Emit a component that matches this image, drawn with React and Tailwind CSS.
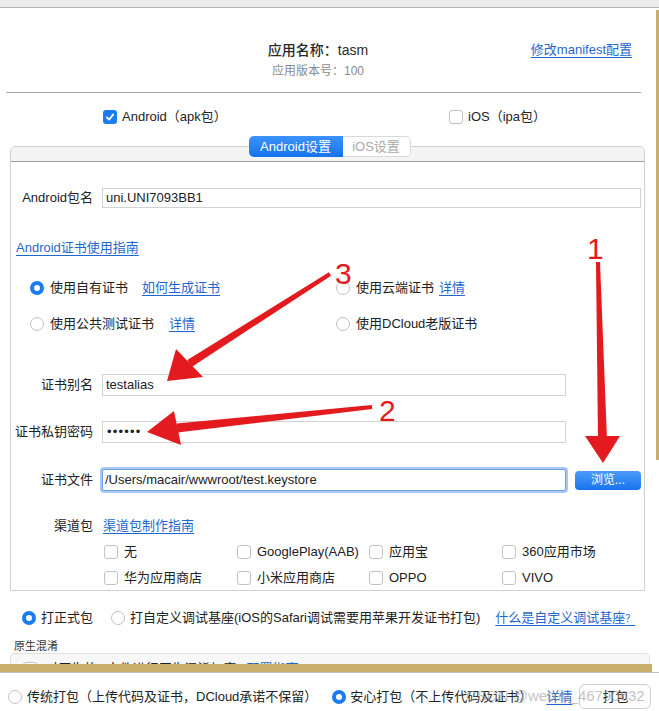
import React from 'react';

const Check = ({ checked }) =>
  checked ? (
    <span className="flex h-[14px] w-[14px] shrink-0 items-center justify-center rounded-[3px] bg-[#1a7cf2]">
      <svg width="10" height="10" viewBox="0 0 10 10">
        <path d="M1.8 5.3 L4.1 7.6 L8.3 2.4" fill="none" stroke="white" strokeWidth="1.8" strokeLinecap="round" strokeLinejoin="round" />
      </svg>
    </span>
  ) : (
    <span className="block h-[14px] w-[14px] shrink-0 rounded-[3px] border border-[#c2c2c2] bg-white" />
  );

const Radio = ({ checked }) =>
  checked ? (
    <span className="flex h-[14px] w-[14px] shrink-0 items-center justify-center rounded-full bg-[#1a7cf2]">
      <span className="block h-[6px] w-[6px] rounded-full bg-white" />
    </span>
  ) : (
    <span className="block h-[14px] w-[14px] shrink-0 rounded-full border border-[#c2c2c2] bg-white" />
  );

const Link = ({ children, className = '' }) => (
  <span className={'text-[#1f67cf] underline decoration-[#1f67cf] underline-offset-[3px] ' + className}>{children}</span>
);

const CheckItem = ({ label, className = '' }) => (
  <div className={'flex items-center ' + className}>
    <Check />
    <span className="ml-[6px]">{label}</span>
  </div>
);

const Arrows = () => (
  <svg className="pointer-events-none absolute left-0 top-0" width="659" height="711" viewBox="0 0 659 711">
    <g fill="#e41b1e">
      {/* 1 */}
      <polygon points="596,262 600,262 607,440 598,440" />
      <polygon points="585,436 620,436 603,463" />
      {/* 3 */}
      <polygon points="328.9,272.3 331.1,275.7 191.7,366.9 187.3,360.1" />
      <polygon points="176,349 203,377 167,381" />
      {/* 2 */}
      <polygon points="371.8,405 372.2,409 177.5,432.5 176.5,423.5" />
      <polygon points="174,411 181,445 147,432" />
    </g>
    <g fill="#e41b1e" fontFamily="Liberation Sans, sans-serif" fontSize="30">
      <text x="587" y="259">1</text>
      <text x="335" y="284">3</text>
      <text x="379" y="421">2</text>
    </g>
  </svg>
);

export default function App() {
  return (
    <div className="relative h-[711px] w-[659px] overflow-hidden bg-white font-['Liberation_Sans','Noto_Sans_CJK_SC',sans-serif] text-[13px] leading-[18px] text-[#222]">
      {/* window top strip */}
      <div className="h-[8px] border-b border-[#b4b4b4] bg-[#ececec]" />

      {/* app header */}
      <div className="mt-[33px] grid w-[636px] grid-cols-[1fr_auto_1fr]">
        <div />
        <div className="flex flex-col items-center">
          <div className="text-[14px] font-medium text-[#2a2a2a]">应用名称：tasm</div>
          <div className="mt-[5px] text-[12px] leading-[14px] text-[#8a8a8a]">应用版本号：100</div>
        </div>
        <div className="flex justify-end pr-[4px]">
          <Link className="h-[18px]">修改manifest配置</Link>
        </div>
      </div>

      <div className="ml-[6px] mt-[14px] h-px w-[635px] bg-[#a8a8a8]" />

      {/* platform */}
      <div className="mt-[15px] flex h-[18px] items-center pl-[103px]">
        <div className="flex w-[346px] items-center">
          <Check checked />
          <span className="ml-[5px]">Android（apk包）</span>
        </div>
        <div className="flex items-center">
          <Check />
          <span className="ml-[5px]">iOS（ipa包）</span>
        </div>
      </div>

      {/* tabs */}
      <div className="relative z-10 mt-[10px] flex h-[21px] justify-center">
        <div className="flex w-[94px] items-center justify-center rounded-l-[5px] bg-gradient-to-b from-[#3b93f7] to-[#1673ee] text-white">Android设置</div>
        <div className="flex w-[68px] items-center justify-center rounded-r-[5px] border border-l-0 border-[#dadada] bg-white text-[#a9a9a9]">iOS设置</div>
      </div>

      {/* android panel */}
      <div className="relative -mt-[11px] ml-[10px] w-[635px] rounded-t-[5px] border border-[#d0d0d0] pb-[3px]">
        <div className="h-[15px] rounded-t-[5px] border-b border-[#9d9d9d] bg-[#f4f4f4]" />

        <div className="mt-[26px] flex h-[20px] items-center">
          <div className="w-[82px] text-right">Android包名</div>
          <div className="ml-[9px] flex h-[20px] w-[539px] items-center border border-[#d2d2d2] bg-white pl-[3px]">uni.UNI7093BB1</div>
        </div>

        <div className="mt-[31px] pl-[5px]">
          <Link>Android证书使用指南</Link>
        </div>

        <div className="mt-[22px] flex h-[18px] items-center pl-[19px]">
          <div className="flex w-[306px] items-center">
            <Radio checked />
            <span className="ml-[6px]">使用自有证书</span>
            <Link className="ml-[14px]">如何生成证书</Link>
          </div>
          <div className="flex items-center">
            <Radio />
            <span className="ml-[6px]">使用云端证书</span>
            <Link className="ml-[5px]">详情</Link>
          </div>
        </div>

        <div className="mt-[18px] flex h-[18px] items-center pl-[19px]">
          <div className="flex w-[306px] items-center">
            <Radio />
            <span className="ml-[6px]">使用公共测试证书</span>
            <Link className="ml-[15px]">详情</Link>
          </div>
          <div className="flex items-center">
            <Radio />
            <span className="ml-[6px]">使用DCloud老版证书</span>
          </div>
        </div>

        <div className="mt-[41px] flex h-[22px] items-center">
          <div className="w-[82px] text-right">证书别名</div>
          <div className="ml-[9px] flex h-[22px] w-[464px] items-center border border-[#d2d2d2] bg-white pl-[3px]">testalias</div>
        </div>

        <div className="mt-[25px] flex h-[22px] items-center">
          <div className="w-[82px] text-right">证书私钥密码</div>
          <div className="ml-[9px] flex h-[22px] w-[464px] items-center border border-[#d2d2d2] bg-white pl-[4px] tracking-[1.2px]">••••••</div>
        </div>

        <div className="mt-[26px] flex h-[22px] items-center">
          <div className="w-[82px] text-right">证书文件</div>
          <div className="ml-[9px] flex h-[22px] w-[464px] items-center rounded-[2px] border border-[#6e9fe3] bg-white pl-[2px] ring-[2px] ring-[#a9c9f4]">/Users/macair/wwwroot/test.keystore</div>
          <div className="ml-[9px] flex h-[19px] w-[66px] items-center justify-center rounded-[4px] bg-gradient-to-b from-[#4a9bf8] to-[#1673ee] text-[12px] text-white">浏览...</div>
        </div>

        <div className="mt-[26px] flex h-[18px] items-center">
          <div className="w-[82px] text-right">渠道包</div>
          <Link className="ml-[10px]">渠道包制作指南</Link>
        </div>

        <div className="mt-[8px] flex h-[18px] items-center pl-[93px]">
          <CheckItem label="无" className="w-[133px]" />
          <CheckItem label="GooglePlay(AAB)" className="w-[132px]" />
          <CheckItem label="应用宝" className="w-[133px]" />
          <CheckItem label="360应用市场" />
        </div>
        <div className="mt-[8px] flex h-[18px] items-center pl-[93px]">
          <CheckItem label="华为应用商店" className="w-[133px]" />
          <CheckItem label="小米应用商店" className="w-[132px]" />
          <CheckItem label="OPPO" className="w-[133px]" />
          <CheckItem label="VIVO" />
        </div>
      </div>

      {/* build type */}
      <div className="mt-[18px] flex h-[18px] items-center pl-[22px]">
        <Radio checked />
        <span className="ml-[5px]">打正式包</span>
        <div className="ml-[18px]"><Radio /></div>
        <span className="ml-[5px]">打自定义调试基座(iOS的Safari调试需要用苹果开发证书打包)</span>
        <Link className="ml-[15px]">什么是自定义调试基座<span className="text-[10px]">？</span></Link>
      </div>

      <div className="mt-[12px] pl-[14px] text-[11px] leading-[14px] text-[#333]">原生混淆</div>
      <div className="ml-[10px] h-[11px] w-[640px] overflow-hidden rounded-t-[5px] border border-b-0 border-[#e2e2e2] bg-[#f7f7f7]">
        <div className="mt-[6px] flex items-center pl-[12px]">
          <Check />
          <span className="ml-[8px]">对原生的js文件进行原生混淆加密</span>
          <Link className="ml-[10px]">配置指南</Link>
        </div>
      </div>
      <div className="h-[8px] w-[652px] bg-[#c9ae6c]" />
      <div className="h-px bg-[#bdbdbd]" />

      {/* bottom bar */}
      <div className="mt-[11px] flex h-[25px] items-center pl-[8px]">
        <Radio />
        <span className="ml-[5px]">传统打包（上传代码及证书，DCloud承诺不保留）</span>
        <div className="ml-[15px]"><Radio checked /></div>
        <span className="ml-[4px]">安心打包（不上传代码及证书）</span>
        <Link className="ml-[14px]">详情</Link>
        <div className="ml-[7px] flex h-[25px] w-[72px] items-center justify-center rounded-[6px] border border-[#cdcdcd] bg-white">打包</div>
      </div>

      {/* watermark */}
      <div className="pointer-events-none absolute left-[466px] top-[687px] text-[15px] leading-[18px] text-[#9a9a9a]/60">CSDN @weixin_46790632</div>

      {/* window edge */}
      <div className="absolute left-[656px] top-[10px] h-[450px] w-[3px] bg-[#c9ae6c]" />

      <Arrows />
    </div>
  );
}
